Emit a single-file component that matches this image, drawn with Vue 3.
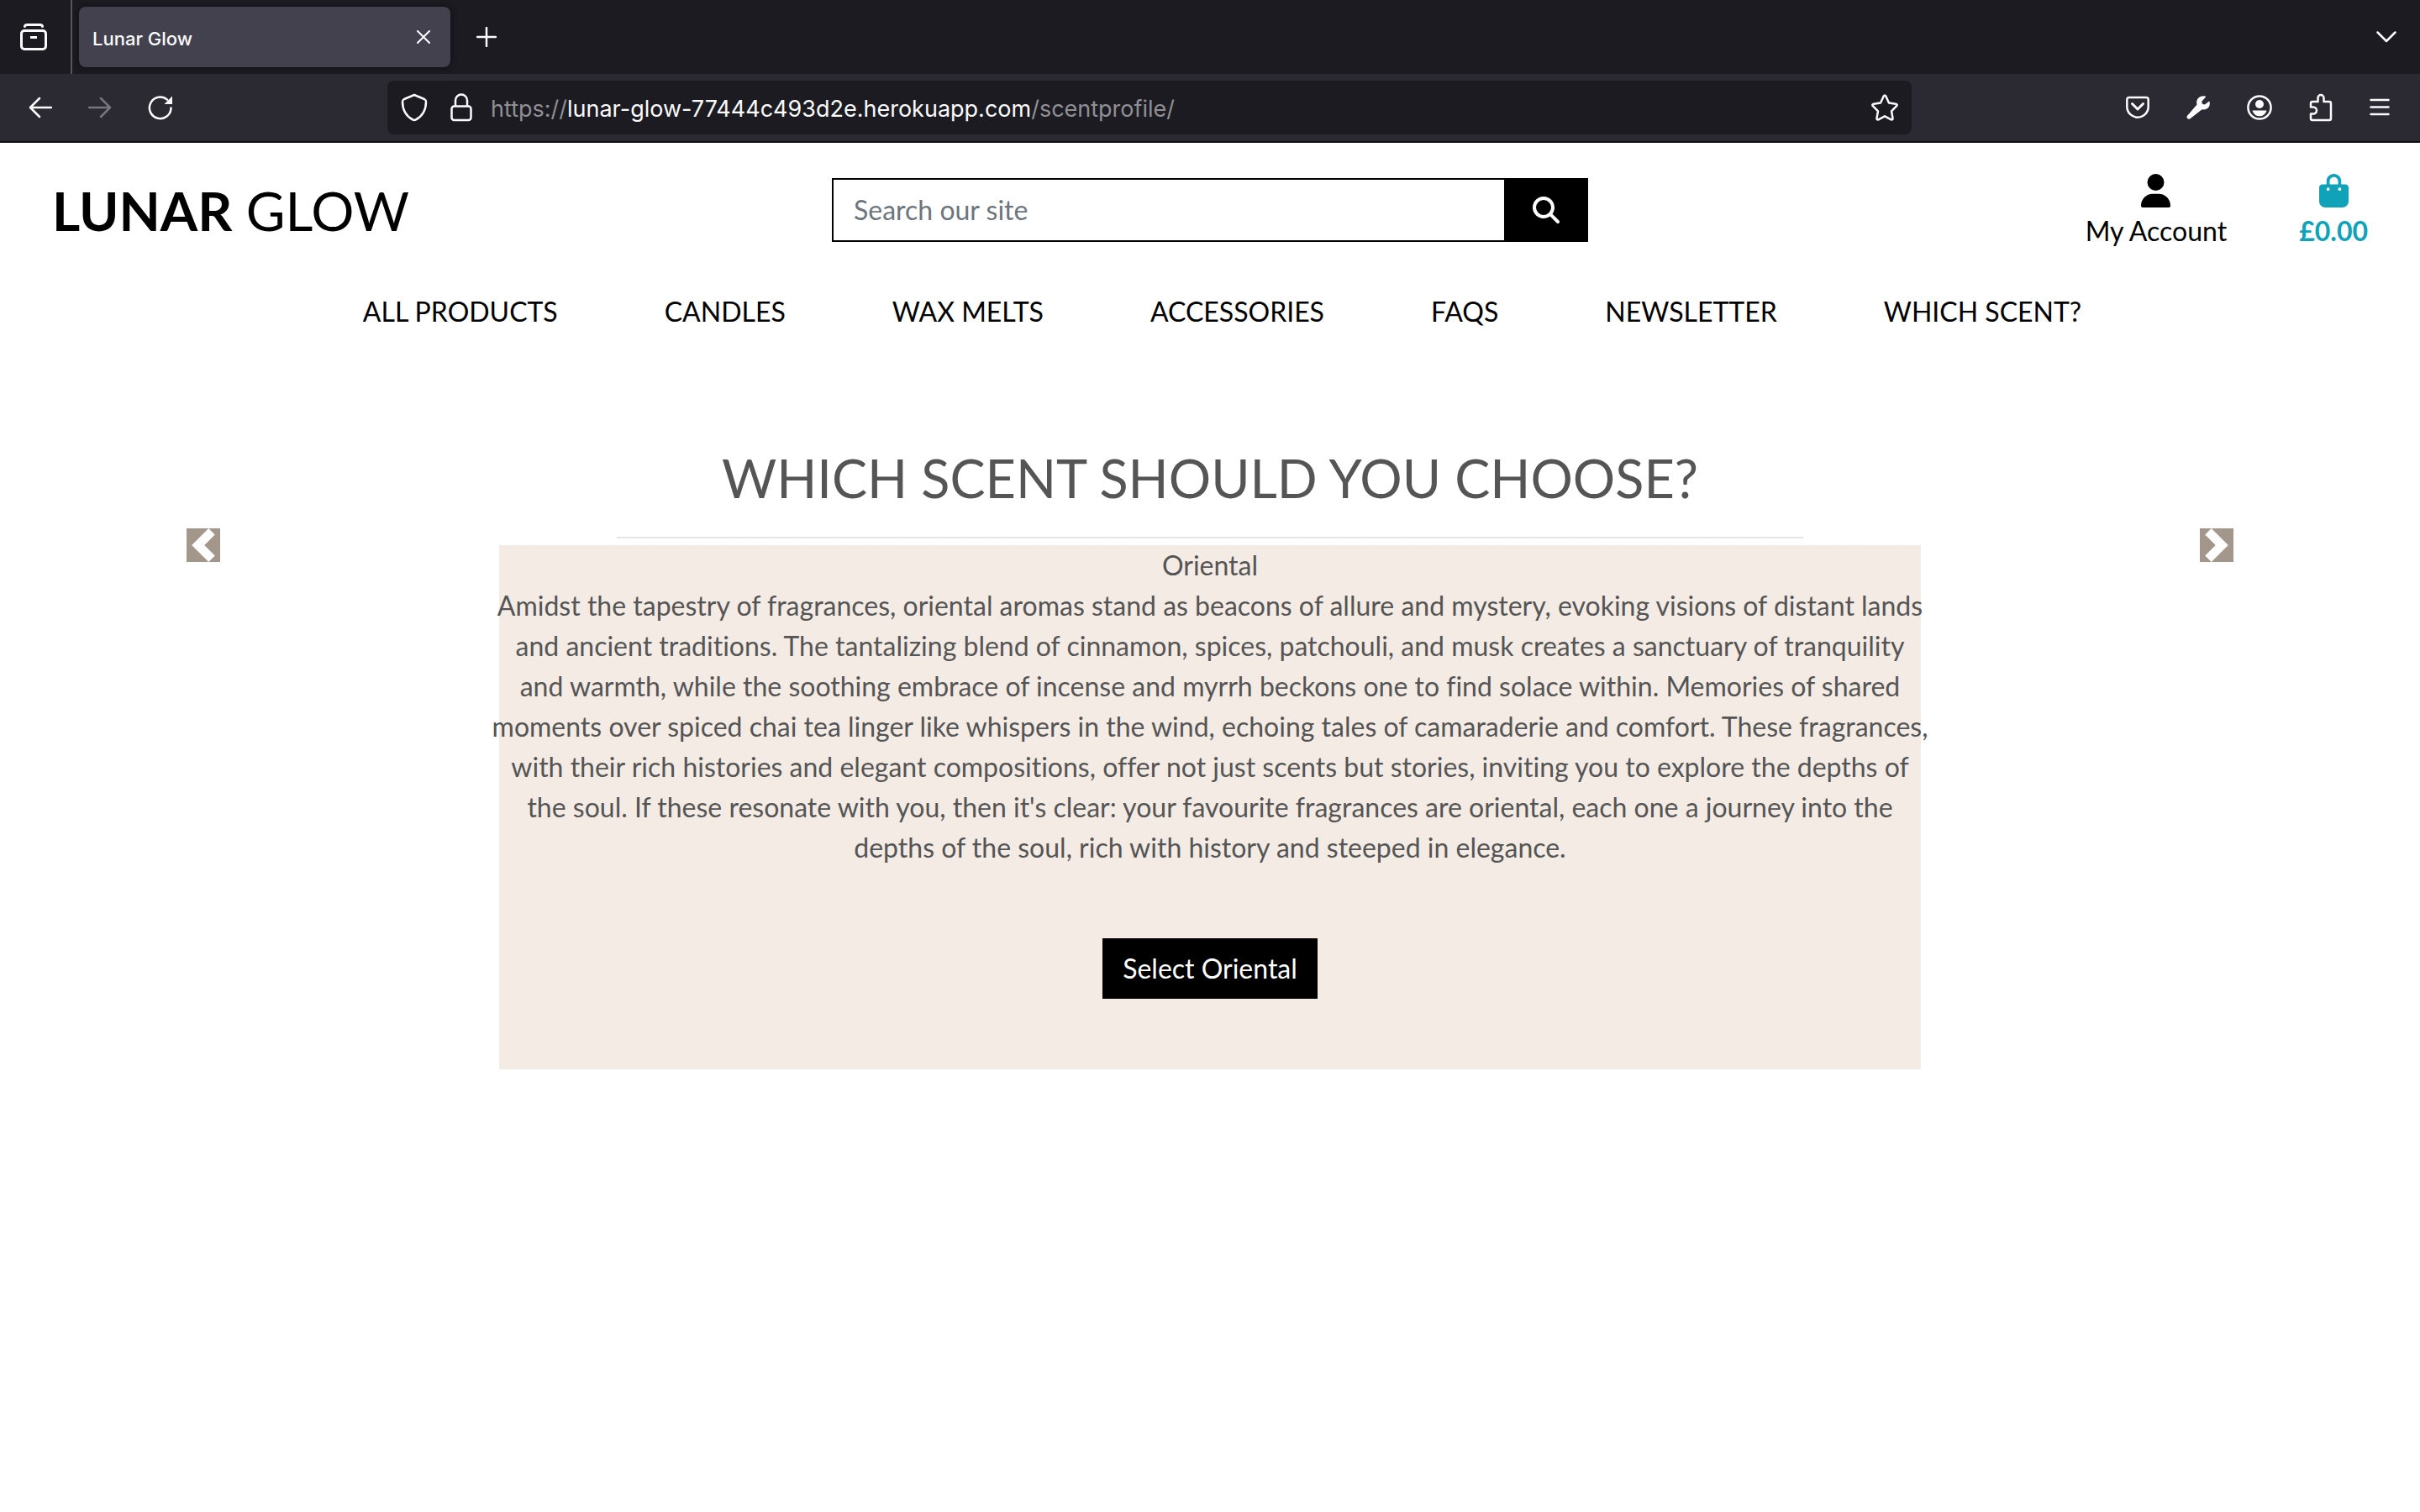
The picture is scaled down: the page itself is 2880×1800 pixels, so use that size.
<script setup>
import { ref } from 'vue'

const query = ref('')
const links = ['All Products', 'Candles', 'Wax Melts', 'Accessories', 'FAQs', 'Newsletter', 'Which Scent?']
</script>

<template>
  <div class="window">
    <div class="tabs">
      <button class="tool archive" aria-label="Recent browsing">
        <svg width="32" height="32" viewBox="0 0 32 32" fill="none" stroke="#fbfbfe" stroke-width="3" stroke-linecap="round">
          <path d="M5.500 3.500q0-2 3-2h15q3 0 3 2" />
          <rect x="1.500" y="8.500" width="29" height="22" rx="3.500" />
          <path d="M12 16.500h8" stroke-linecap="butt" />
        </svg>
      </button>
      <div class="tab">
        <span>Lunar Glow</span>
        <button class="tool" aria-label="Close tab">
          <svg width="16" height="16" viewBox="0 0 16 16" fill="none" stroke="#fbfbfe" stroke-width="2" stroke-linecap="round"><path d="M1 1l14 14M15 1L1 15" /></svg>
        </button>
      </div>
      <button class="tool new-tab" aria-label="New tab">
        <svg width="24" height="24" viewBox="0 0 24 24" fill="none" stroke="#fbfbfe" stroke-width="2.500" stroke-linecap="round"><path d="M12 1v22M1 12h22" /></svg>
      </button>
      <button class="tool list-tabs" aria-label="List all tabs">
        <svg width="24" height="14" viewBox="0 0 24 14" fill="none" stroke="#fbfbfe" stroke-width="2.500" stroke-linecap="round" stroke-linejoin="round"><path d="M1.500 1.500L12 12 22.500 1.500" /></svg>
      </button>
    </div>

    <div class="toolbar">
      <div class="travel">
        <button class="tool" aria-label="Back">
          <svg width="28" height="28" viewBox="0 0 28 28" fill="none" stroke="#fbfbfe" stroke-width="2.500" stroke-linecap="round" stroke-linejoin="round"><path d="M13 3L2 14l11 11M2 14h25" /></svg>
        </button>
        <button class="tool" aria-label="Forward" disabled>
          <svg width="28" height="28" viewBox="0 0 28 28" fill="none" stroke="#76757b" stroke-width="2.500" stroke-linecap="round" stroke-linejoin="round"><path d="M15 3l11 11-11 11M26 14H1" /></svg>
        </button>
        <button class="tool" aria-label="Reload">
          <svg width="30" height="30" viewBox="0 0 30 30" fill="none" stroke="#fbfbfe" stroke-width="2.500" stroke-linecap="round"><path d="M27.500 15.500A12.800 12.800 0 1 1 23 5.600" /><path d="M29 1.500v9.500h-9.500z" fill="#fbfbfe" stroke="none" /></svg>
        </button>
      </div>
      <div class="address">
        <svg width="32" height="34" viewBox="0 0 32 34" fill="none" stroke="#fbfbfe" stroke-width="2.500" stroke-linejoin="round"><path d="M16 2L28 7q2 1 2 3c0 9-4 17-12 21.400q-2 1.200-4 0C6 27 2 19 2 10q0-2 2-3z" /></svg>
        <svg width="26" height="34" viewBox="0 0 26 34" fill="none" stroke="#fbfbfe" stroke-width="2.500"><rect x="1.500" y="15.500" width="23" height="16.500" rx="3" /><path d="M6 15V8.500a7 7 0 0 1 14 0V15" /></svg>
        <span class="url">https://<b>lunar-glow-77444c493d2e.herokuapp.com</b>/scentprofile/</span>
        <button class="tool" aria-label="Bookmark this page">
          <svg width="32" height="32" viewBox="0 0 32 32" fill="none" stroke="#fbfbfe" stroke-width="2.500" stroke-linejoin="round"><path d="M14.700 2.500q1.300-2 2.600 0l3.700 8 8.300 1.200q2.200.600.800 2.500L24 20.300l1.500 8.400q.100 2.300-2 1.600L16 26.300l-7.500 4q-2.100.700-2-1.600L8 20.300l-6.100-6.100q-1.400-1.900.800-2.500L11 10.500z" /></svg>
        </button>
      </div>
      <div class="extras">
        <button class="tool" aria-label="Pocket">
          <svg width="28" height="28" viewBox="0 0 28 28" fill="none" stroke="#fbfbfe" stroke-width="2.500" stroke-linecap="round" stroke-linejoin="round"><path d="M4 2h20q2.700 0 2.700 2.700V13a12.700 12.700 0 0 1-25.400 0V4.700Q1.300 2 4 2z" /><path d="M7.500 9.500L14 16l6.500-6.500" stroke-width="3" /></svg>
        </button>
        <button class="tool" aria-label="Developer tools">
          <svg width="28" height="28" viewBox="0 0 28 28" fill="#fbfbfe"><path d="M27.600 7.200c1.400 6-3.600 10.400-9 9L4.500 27.300c-2.200 1.700-5.200-1-3.600-3.400L12.500 10.500C10.800 4.500 15.500-.500 22.500.500L23 1.500l-4.500 5q-1 3 2.500 4l1.500-.5 4.500-3.500z" /></svg>
        </button>
        <button class="tool" aria-label="Account">
          <svg width="30" height="30" viewBox="0 0 30 30" fill="#fbfbfe"><circle cx="15" cy="15" r="13.600" fill="none" stroke="#fbfbfe" stroke-width="2.500" /><circle cx="15" cy="11" r="5" /><path d="M6.500 18.500h17a8.700 8.700 0 0 1-17 0z" /></svg>
        </button>
        <button class="tool" aria-label="Extensions">
          <svg width="28" height="34" viewBox="0 0 28 34" fill="none" stroke="#fbfbfe" stroke-width="2.500" stroke-linejoin="round"><path d="M2 16.500V12q0-2 2-2h6.500V5.500a3.500 3.500 0 0 1 7 0V10H24q2 0 2 2v18q0 2-2 2H4q-2 0-2-2v-5.500h3a4 4 0 0 0 0-8z" /></svg>
        </button>
        <button class="tool" aria-label="Menu">
          <svg width="24" height="22" viewBox="0 0 24 22" fill="none" stroke="#fbfbfe" stroke-width="2.500" stroke-linecap="round"><path d="M1.500 2h21M1.500 10.500h21M1.500 19h21" /></svg>
        </button>
      </div>
    </div>

    <header>
      <a href="#" class="logo"><strong>LUNAR</strong> GLOW</a>
      <form class="search" role="search" @submit.prevent>
        <input v-model="query" type="text" placeholder="Search our site" aria-label="Search our site">
        <button aria-label="Search">
          <svg width="32" height="32" viewBox="0 0 512 512" fill="#fff"><path d="M416 208c0 45.900-14.900 88.300-40 122.700L502.600 457.400c12.500 12.500 12.500 32.800 0 45.300s-32.800 12.500-45.300 0L330.700 376c-34.400 25.200-76.800 40-122.700 40C93.100 416 0 322.900 0 208S93.100 0 208 0S416 93.100 416 208zM208 352a144 144 0 1 0 0-288 144 144 0 1 0 0 288z" /></svg>
        </button>
      </form>
      <div class="user">
        <a href="#">
          <svg width="35" height="40" viewBox="0 0 448 512" fill="currentColor"><path d="M224 256A128 128 0 1 0 224 0a128 128 0 1 0 0 256zm-45.700 48C79.800 304 0 383.800 0 482.300C0 498.700 13.300 512 29.700 512H418.300c16.400 0 29.700-13.300 29.700-29.700C448 383.800 368.200 304 269.700 304H178.300z" /></svg>
          <span>My Account</span>
        </a>
        <a href="#" class="bag">
          <svg width="35" height="40" viewBox="0 0 448 512" fill="currentColor"><path d="M160 112c0-35.300 28.700-64 64-64s64 28.700 64 64v48H160V112zm-48 48H48c-26.500 0-48 21.500-48 48V416c0 53 43 96 96 96H352c53 0 96-43 96-96V208c0-26.500-21.500-48-48-48H336V112C336 50.100 285.900 0 224 0S112 50.100 112 112v48zm24 48a24 24 0 1 1 0 48 24 24 0 1 1 0-48zm152 24a24 24 0 1 1 48 0 24 24 0 1 1-48 0z" /></svg>
          <span>£0.00</span>
        </a>
      </div>
    </header>

    <nav>
      <a v-for="link in links" :key="link" href="#">{{ link }}</a>
    </nav>

    <main>
      <h1>WHICH SCENT SHOULD YOU CHOOSE?</h1>
      <hr>
      <section class="carousel">
        <button class="arrow" aria-label="Previous">
          <svg width="40" height="40" viewBox="0 0 8 8" fill="#fff"><path d="M5.250 0l-4 4 4 4 1.500-1.500L4.250 4l2.500-2.500L5.250 0z" /></svg>
        </button>
        <article>
          <p>Oriental</p>
          <p>
            Amidst the tapestry of fragrances, oriental aromas stand as beacons of allure and mystery, evoking visions of distant lands<br>
            and ancient traditions. The tantalizing blend of cinnamon, spices, patchouli, and musk creates a sanctuary of tranquility<br>
            and warmth, while the soothing embrace of incense and myrrh beckons one to find solace within. Memories of shared<br>
            moments over spiced chai tea linger like whispers in the wind, echoing tales of camaraderie and comfort. These fragrances,<br>
            with their rich histories and elegant compositions, offer not just scents but stories, inviting you to explore the depths of<br>
            the soul. If these resonate with you, then it's clear: your favourite fragrances are oriental, each one a journey into the<br>
            depths of the soul, rich with history and steeped in elegance.
          </p>
          <button class="select">Select Oriental</button>
        </article>
        <button class="arrow" aria-label="Next">
          <svg width="40" height="40" viewBox="0 0 8 8" fill="#fff"><path d="M2.750 0l-1.500 1.500L3.750 4l-2.500 2.500L2.750 8l4-4-4-4z" /></svg>
        </button>
      </section>
    </main>
  </div>
</template>

<style>
body {
  background: #fff;
}
</style>

<style scoped>
* {
  box-sizing: border-box;
}
.window {
  font: 32px/48px Lato, "Liberation Sans", sans-serif;
  color: #555;
}
button {
  font: inherit;
  border: 0;
  padding: 0;
}
a {
  color: #000;
  text-decoration: none;
}
svg {
  display: block;
  flex: none;
}
.tool {
  background: none;
  display: flex;
}

.tabs {
  display: flex;
  align-items: center;
  height: 88px;
  background: #1c1b22;
}
.archive {
  height: 88px;
  width: 86px;
  padding-left: 24px;
  align-items: center;
  border-right: 2px solid #56555b;
}
.tab {
  display: flex;
  align-items: center;
  justify-content: space-between;
  width: 442px;
  height: 72px;
  margin: 0 31px 0 8px;
  padding: 0 24px 0 16px;
  border-radius: 8px;
  background: #42414d;
  box-shadow: 0 0 8px rgba(0, 0, 0, 0.5);
  color: #fbfbfe;
  font: 500 22px/32px Inter, sans-serif;
}
.tab span,
.url {
  padding-top: 3px;
}
.list-tabs {
  margin: 0 28px 0 auto;
}

.toolbar {
  display: flex;
  align-items: center;
  height: 82px;
  padding: 0 36px 0 34px;
  background: #2b2a33;
  border-bottom: 2px solid #0c0c0d;
}
.travel {
  display: flex;
  align-items: center;
  gap: 43px;
  width: 427px;
}
.address {
  flex: 1;
  display: flex;
  align-items: center;
  height: 64px;
  padding: 0 16px;
  border-radius: 8px;
  background: #1c1b22;
}
.address svg + svg {
  margin: 0 22px 0 27px;
}
.url {
  flex: 1;
  color: #8f8f94;
  font: 27px/40px Inter, sans-serif;
}
.url b {
  color: #fbfbfe;
  font-weight: 400;
}
.extras {
  display: flex;
  align-items: center;
  justify-content: space-between;
  width: 314px;
  margin-left: 255px;
}

header {
  display: grid;
  grid-template-columns: 1fr 900px 1fr;
  align-items: center;
  padding: 31px 62px 0;
}
.logo {
  font-size: 64px;
  line-height: 77px;
}
.search {
  display: flex;
  height: 76px;
}
.search input {
  flex: 1;
  min-width: 0;
  padding: 0 24px;
  border: 2px solid #000;
  border-right: 0;
  border-radius: 0;
  background: #fff;
  font: inherit;
  outline: 0;
}
.search input::placeholder {
  color: #6c757d;
  opacity: 1;
}
.search button {
  width: 100px;
  display: flex;
  align-items: center;
  justify-content: center;
  background: #000;
}
.user {
  display: flex;
  justify-content: flex-end;
  gap: 86px;
  padding-top: 6px;
}
.user a {
  display: flex;
  flex-direction: column;
  align-items: center;
  gap: 4px;
}
.user .bag {
  color: #10a2b8;
  font-weight: 700;
}

nav {
  display: flex;
  justify-content: center;
  gap: 127px;
  margin-top: 48px;
  padding-left: 29px;
  text-transform: uppercase;
}

main {
  padding-top: 135px;
  text-align: center;
}
h1 {
  margin: 0;
  font-size: 63px;
  font-weight: 400;
  line-height: 77px;
}
hr {
  width: 49%;
  height: 2px;
  margin: 32px auto 8px;
  border: 0;
  background: #e5e5e5;
}
.carousel {
  display: flex;
  align-items: flex-start;
  justify-content: space-between;
  padding: 0 222px;
}
.arrow {
  margin-top: -20px;
  background: #a3978b;
}
article {
  width: 1692px;
  padding-bottom: 84px;
  background: #f3ebe4;
}
p {
  margin: 0 -16px;
  font-variant-ligatures: none;
}
.select {
  height: 72px;
  margin-top: 84px;
  padding: 0 24px;
  background: #000;
  color: #fff;
}
</style>
